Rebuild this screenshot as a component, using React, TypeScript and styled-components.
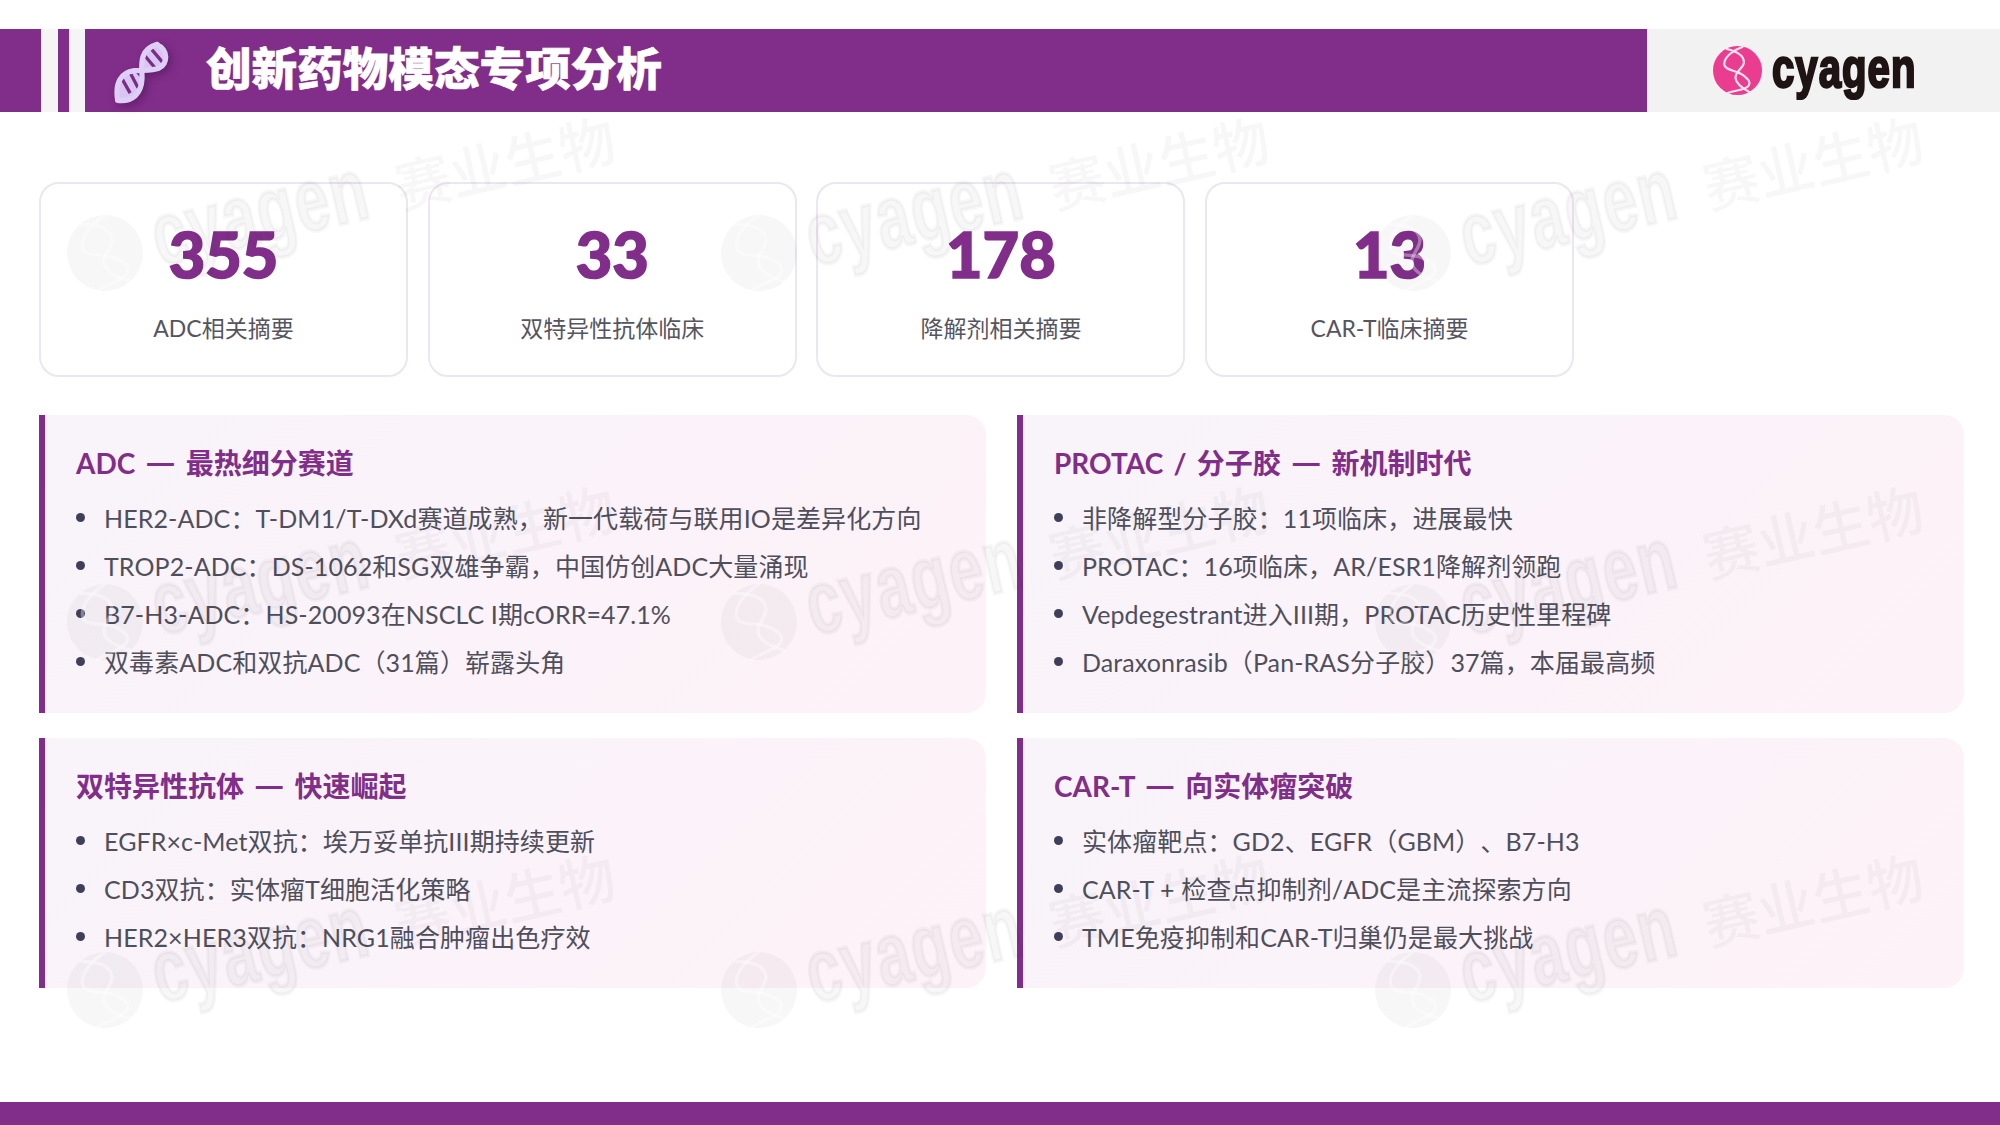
import styled, { createGlobalStyle } from "styled-components";

const PURPLE = "#812e8a";
const BODY_FONT = `Lato, "Noto Sans CJK SC", sans-serif`;

const GlobalStyle = createGlobalStyle`
  html, body {
    margin: 0;
    padding: 0;
    background: #fff;
  }
  * {
    box-sizing: border-box;
  }
`;

const Slide = styled.div`
  position: relative;
  width: 2000px;
  height: 1125px;
  overflow: hidden;
  display: flex;
  flex-direction: column;
  background: #fff;
  font-family: ${BODY_FONT};
  text-spacing-trim: space-all;
`;

const Header = styled.header`
  display: flex;
  height: 83px;
  margin-top: 29px;
`;

const Stripe = styled.div<{ $width: number; $light?: boolean }>`
  width: ${(p) => p.$width}px;
  background: ${(p) => (p.$light ? "#f5f5f5" : PURPLE)};
`;

const TitleBar = styled.div`
  flex: 1;
  display: flex;
  align-items: center;
  padding-left: 28px;
  background: ${PURPLE};
`;

const DnaSvg = styled.svg`
  width: 56px;
  height: 66px;
  margin-right: 37px;
  margin-top: 2px;
  filter: drop-shadow(3px 3px 4px rgba(60, 10, 70, 0.45));
`;

const Title = styled.h1`
  margin: 0;
  padding-bottom: 7px;
  font-family: "Noto Sans CJK SC", sans-serif;
  font-size: 45.6px;
  font-weight: 900;
  line-height: 1;
  color: #fff;
  -webkit-text-stroke: 0.6px #fff;
`;

const LogoPanel = styled.div`
  width: 353px;
  display: flex;
  align-items: center;
  gap: 10px;
  padding-left: 66px;
  background: #f2f2f2;
`;

const MarkSvg = styled.svg<{ $size: number }>`
  flex: none;
  width: ${(p) => p.$size}px;
  height: ${(p) => p.$size}px;
`;

const Wordmark = styled.span<{ $size: number; $sx: number; $sy: number; $color: string }>`
  display: inline-block;
  padding-bottom: ${(p) => p.$size / 10}px;
  font-family: "Liberation Sans", sans-serif;
  font-weight: 700;
  font-size: ${(p) => p.$size}px;
  line-height: 1;
  color: ${(p) => p.$color};
  -webkit-text-stroke: ${(p) => p.$size / 22}px ${(p) => p.$color};
  paint-order: stroke fill;
  letter-spacing: ${(p) => p.$size / 40}px;
  transform-origin: left center;
  transform: scale(${(p) => p.$sx}, ${(p) => p.$sy});
  width: ${(p) => p.$size * 3.6 * p.$sx}px;
  white-space: nowrap;
`;

const Content = styled.main`
  flex: 1;
  display: flex;
  flex-direction: column;
  padding: 70px 36px 0 39px;
`;

const StatRow = styled.section`
  display: flex;
  gap: 19.7px;
`;

const StatCard = styled.div`
  width: 369px;
  height: 195px;
  display: flex;
  flex-direction: column;
  align-items: center;
  padding-top: 33px;
  border: 2px solid #ece6f0;
  border-radius: 20px;
  background: #fff;
`;

const StatValue = styled.div`
  font-family: Lato, sans-serif;
  font-size: 63px;
  font-weight: 900;
  line-height: 74px;
  color: ${PURPLE};
  -webkit-text-stroke: 1.6px ${PURPLE};
`;

const StatLabel = styled.div`
  margin-top: 21px;
  font-size: 23px;
  line-height: 32px;
  color: #55555f;
`;

const PanelGrid = styled.section`
  display: grid;
  grid-template-columns: 947px 947px;
  column-gap: 31px;
  row-gap: 25px;
  margin-top: 38px;
`;

const Panel = styled.article`
  padding: 28px 24px 28px 31px;
  border-left: 6px solid ${PURPLE};
  border-radius: 0 20px 20px 0;
  background: linear-gradient(135deg, #f8f4fa 0%, #fdf2f8 100%);
`;

const PanelTitle = styled.h2`
  margin: 0 0 10px;
  font-size: 28px;
  font-weight: 700;
  line-height: 40px;
  color: ${PURPLE};
  word-spacing: 3.5px;
`;

const TitleDash = styled.span`
  font-family: "Noto Sans CJK SC", sans-serif;
  font-size: 33px;
  line-height: 0;
`;

const BulletList = styled.ul`
  margin: 0;
  padding: 0;
  list-style: none;
`;

const Bullet = styled.li`
  display: flex;
  align-items: center;
  gap: 19px;
  height: 48px;
  font-size: 25px;
  letter-spacing: 0.1px;
  color: #4f4f5c;
  white-space: nowrap;

  &::before {
    content: "";
    flex: none;
    width: 9px;
    height: 9px;
    border-radius: 50%;
    background: #3f3f5a;
  }
`;

const Footer = styled.footer`
  height: 23px;
  background: ${PURPLE};
`;

const WatermarkLayer = styled.div`
  position: absolute;
  inset: 0;
  display: grid;
  grid-template-columns: repeat(3, 654px);
  grid-auto-rows: 368.5px;
  padding: 215px 0 0 67px;
  pointer-events: none;
`;

const WatermarkItem = styled.div`
  display: flex;
  align-items: center;
  gap: 12px;
  height: 76px;
  width: 560px;
  transform-origin: 38px 38px;
  transform: rotate(-13deg);
`;

const WatermarkCn = styled.span`
  margin-left: 20px;
  font-family: "Noto Sans CJK SC", sans-serif;
  font-size: 56px;
  font-weight: 500;
  line-height: 1;
  white-space: nowrap;
  color: rgba(50, 40, 50, 0.04);
`;

type Section = { lead: string; sub: string; items: string[] };

const stats = [
  { value: "355", label: "ADC相关摘要" },
  { value: "33", label: "双特异性抗体临床" },
  { value: "178", label: "降解剂相关摘要" },
  { value: "13", label: "CAR-T临床摘要" },
];

const sections: Section[] = [
  {
    lead: "ADC",
    sub: "最热细分赛道",
    items: [
      "HER2-ADC：T-DM1/T-DXd赛道成熟，新一代载荷与联用IO是差异化方向",
      "TROP2-ADC：DS-1062和SG双雄争霸，中国仿创ADC大量涌现",
      "B7-H3-ADC：HS-20093在NSCLC I期cORR=47.1%",
      "双毒素ADC和双抗ADC（31篇）崭露头角",
    ],
  },
  {
    lead: "PROTAC / 分子胶",
    sub: "新机制时代",
    items: [
      "非降解型分子胶：11项临床，进展最快",
      "PROTAC：16项临床，AR/ESR1降解剂领跑",
      "Vepdegestrant进入III期，PROTAC历史性里程碑",
      "Daraxonrasib（Pan-RAS分子胶）37篇，本届最高频",
    ],
  },
  {
    lead: "双特异性抗体",
    sub: "快速崛起",
    items: [
      "EGFR×c-Met双抗：埃万妥单抗III期持续更新",
      "CD3双抗：实体瘤T细胞活化策略",
      "HER2×HER3双抗：NRG1融合肿瘤出色疗效",
    ],
  },
  {
    lead: "CAR-T",
    sub: "向实体瘤突破",
    items: [
      "实体瘤靶点：GD2、EGFR（GBM）、B7-H3",
      "CAR-T + 检查点抑制剂/ADC是主流探索方向",
      "TME免疫抑制和CAR-T归巢仍是最大挑战",
    ],
  },
];

const DnaIcon = () => (
  <DnaSvg viewBox="36 32 170 192" fill="none">
    <path
      d="M50 212 C42 160 60 130 100 124 L124 150 C122 192 96 220 50 214 Z"
      fill="#d9c5f1"
    />
    <path
      d="M124 112 C118 80 130 58 170 45 C190 52 198 66 196 84 C194 112 170 124 140 124 Z"
      fill="#d9c5f1"
    />
    <g stroke="#7a2c86" strokeWidth="10" strokeLinecap="butt">
      <path d="M62 146 L88 192 M88 130 L112 176" />
      <path d="M132 78 L164 116 M154 60 L186 98" />
    </g>
    <g stroke="#dfcef5" strokeWidth="16" strokeLinecap="round" strokeLinejoin="round">
      <path d="M50 212 C42 160 60 130 100 124 C145 120 196 130 196 82 C196 66 186 52 170 46" />
      <path d="M50 214 C96 220 122 192 124 150 C126 118 108 62 170 44" />
    </g>
  </DnaSvg>
);

const LogoMark = ({ size, fill, strand }: { size: number; fill: string; strand: string }) => (
  <MarkSvg $size={size} viewBox="0 0 100 100" fill="none">
    <circle cx="50" cy="50" r="50" fill={fill} />
    <g stroke={strand} strokeWidth="4.5" strokeLinecap="round">
      <path d="M28 6 C42 10 64 16 63 34 C62 46 44 52 46 66 C47 76 60 86 74 94" />
      <path d="M60 2 C42 8 22 22 23 38 C24 50 50 50 62 60 C72 68 78 74 72 82 C66 90 44 90 30 96" />
    </g>
  </MarkSvg>
);

const Watermark = () => (
  <WatermarkItem>
    <LogoMark size={76} fill="rgba(50,40,50,0.04)" strand="rgba(255,255,255,0.35)" />
    <Wordmark $size={60} $sx={1.02} $sy={1.5} $color="rgba(50,40,50,0.04)">
      cyagen
    </Wordmark>
    <WatermarkCn>赛业生物</WatermarkCn>
  </WatermarkItem>
);

const App = () => {
  return (
    <Slide>
      <GlobalStyle />
      <Header>
        <Stripe $width={41} />
        <Stripe $width={17} $light />
        <Stripe $width={11} />
        <Stripe $width={16} $light />
        <TitleBar>
          <DnaIcon />
          <Title>创新药物模态专项分析</Title>
        </TitleBar>
        <LogoPanel>
          <LogoMark size={49} fill="#ea3d8f" strand="#fbe3ee" />
          <Wordmark $size={39} $sx={1.03} $sy={1.42} $color="#1d1413">
            cyagen
          </Wordmark>
        </LogoPanel>
      </Header>
      <Content>
        <StatRow>
          {stats.map((stat) => (
            <StatCard key={stat.label}>
              <StatValue>{stat.value}</StatValue>
              <StatLabel>{stat.label}</StatLabel>
            </StatCard>
          ))}
        </StatRow>
        <PanelGrid>
          {sections.map((section) => (
            <Panel key={section.lead}>
              <PanelTitle>
                {section.lead} <TitleDash>—</TitleDash> {section.sub}
              </PanelTitle>
              <BulletList>
                {section.items.map((item) => (
                  <Bullet key={item}>{item}</Bullet>
                ))}
              </BulletList>
            </Panel>
          ))}
        </PanelGrid>
      </Content>
      <Footer />
      <WatermarkLayer>
        {Array.from({ length: 9 }, (_, i) => (
          <Watermark key={i} />
        ))}
      </WatermarkLayer>
    </Slide>
  );
};

export default App;
